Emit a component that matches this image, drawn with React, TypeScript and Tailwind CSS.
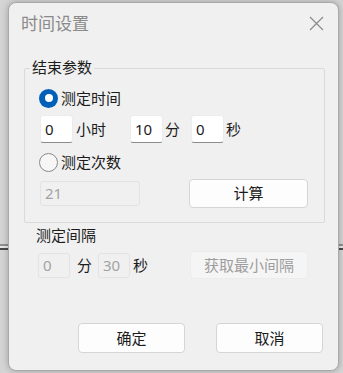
import React from "react";

const font = { fontFamily: '"Noto Sans CJK SC", "Noto Sans", sans-serif' };

function Radio({ checked }: { checked?: boolean }) {
  if (checked) {
    return (
      <span className="flex h-[19px] w-[19px] items-center justify-center rounded-full bg-[#005fb8]">
        <span className="h-[8px] w-[8px] rounded-full bg-white" />
      </span>
    );
  }
  return <span className="h-[19px] w-[19px] rounded-full border border-[#8a8a8a] bg-[#f6f6f6]" />;
}

function Field({ value, w, disabled }: { value: string; w: string; disabled?: boolean }) {
  return disabled ? (
    <div
      className={`${w} flex h-[25px] items-center rounded-[3px] border border-[#e3e3e3] bg-[#f0f0f0] pl-[4px] text-[15px] text-[#a3a3a3]`}
      style={{ fontFamily: '"Noto Sans", sans-serif' }}
    >
      {value}
    </div>
  ) : (
    <div
      className={`${w} flex h-[28px] items-center rounded-[3px] border border-[#ececec] border-b-[#8c8c8c] bg-white pl-[4px] text-[15px] text-[#1b1b1b]`}
      style={{ fontFamily: '"Noto Sans", sans-serif' }}
    >
      {value}
    </div>
  );
}

function Button({ label, w, h, disabled }: { label: string; w: string; h: string; disabled?: boolean }) {
  return (
    <button
      className={`${w} ${h} flex items-center justify-center rounded-[4px] border text-[15px] ${
        disabled ? "border-[#ececec] bg-[#f5f5f5] text-[#9d9d9d]" : "border-[#d5d5d5] bg-[#fdfdfd] text-[#1b1b1b]"
      }`}
    >
      {label}
    </button>
  );
}

export default function App() {
  return (
    <div className="relative h-[373px] w-[343px] overflow-hidden bg-[#d4d4d4]" style={font}>
      {/* window behind the dialog */}
      <div className="h-[244px]" />
      <div className="h-[2px] bg-[#8f8f8f]" />
      <div className="h-[2px] bg-[#e6e6e6]" />
      <div className="h-[2px] bg-[#4a4a4a]" />

      {/* dialog */}
      <div className="absolute left-[8px] top-[2px] flex h-[369px] w-[331px] flex-col rounded-[8px] border border-[#a9a9a9] bg-[#f0f0f0] shadow-[0_0_6px_rgba(0,0,0,0.25)]">
        <div className="flex items-center justify-between pl-[12px] pr-[14px] pt-[8px]">
          <span className="text-[17px] leading-[24px] text-[#8a8a8a]">时间设置</span>
          <svg width="15" height="15" viewBox="0 0 15 15" className="mt-[1px]">
            <path d="M1 1 L14 14 M14 1 L1 14" stroke="#8a8a8a" strokeWidth="1.2" fill="none" />
          </svg>
        </div>

        {/* group box */}
        <div className="relative ml-[15px] mt-[33px] w-[301px] rounded-[2px] border border-[#dadada] pb-[14px] pl-[14px] pt-[19px] text-[15px] text-[#1b1b1b]">
          <span className="absolute left-[5px] top-[-12px] bg-[#f0f0f0] px-[2px] leading-[20px]">结束参数</span>

          <div className="flex h-[20px] items-center gap-[3px]">
            <Radio checked />
            <span className="leading-[20px]">测定时间</span>
          </div>

          <div className="ml-[1px] mt-[7px] flex h-[28px] items-center">
            <Field value="0" w="w-[33px]" />
            <span className="ml-[3px] w-[54px]">小时</span>
            <Field value="10" w="w-[33px]" />
            <span className="ml-[2px] w-[26px]">分</span>
            <Field value="0" w="w-[33px]" />
            <span className="ml-[2px]">秒</span>
          </div>

          <div className="mt-[9px] flex h-[20px] items-center gap-[3px]">
            <Radio />
            <span className="leading-[20px]">测定次数</span>
          </div>

          <div className="ml-[1px] mt-[7px] flex h-[29px] items-center">
            <Field value="21" w="w-[100px]" disabled />
            <div className="ml-[49px]">
              <Button label="计算" w="w-[119px]" h="h-[29px]" />
            </div>
          </div>
        </div>

        <span className="ml-[27px] mt-[2px] text-[15px] leading-[20px] text-[#1b1b1b]">测定间隔</span>

        <div className="ml-[29px] mt-[6px] flex h-[28px] items-center text-[15px] text-[#1b1b1b]">
          <div className="flex w-[152px] items-center">
            <Field value="0" w="w-[32px]" disabled />
            <span className="ml-[7px] w-[21px]">分</span>
            <Field value="30" w="w-[32px]" disabled />
            <span className="ml-[3px]">秒</span>
          </div>
          <Button label="获取最小间隔" w="w-[118px]" h="h-[28px]" disabled />
        </div>

        <div className="mt-[44px] flex justify-end gap-[31px] pr-[15px]">
          <Button label="确定" w="w-[107px]" h="h-[30px]" />
          <Button label="取消" w="w-[107px]" h="h-[30px]" />
        </div>
      </div>
    </div>
  );
}
